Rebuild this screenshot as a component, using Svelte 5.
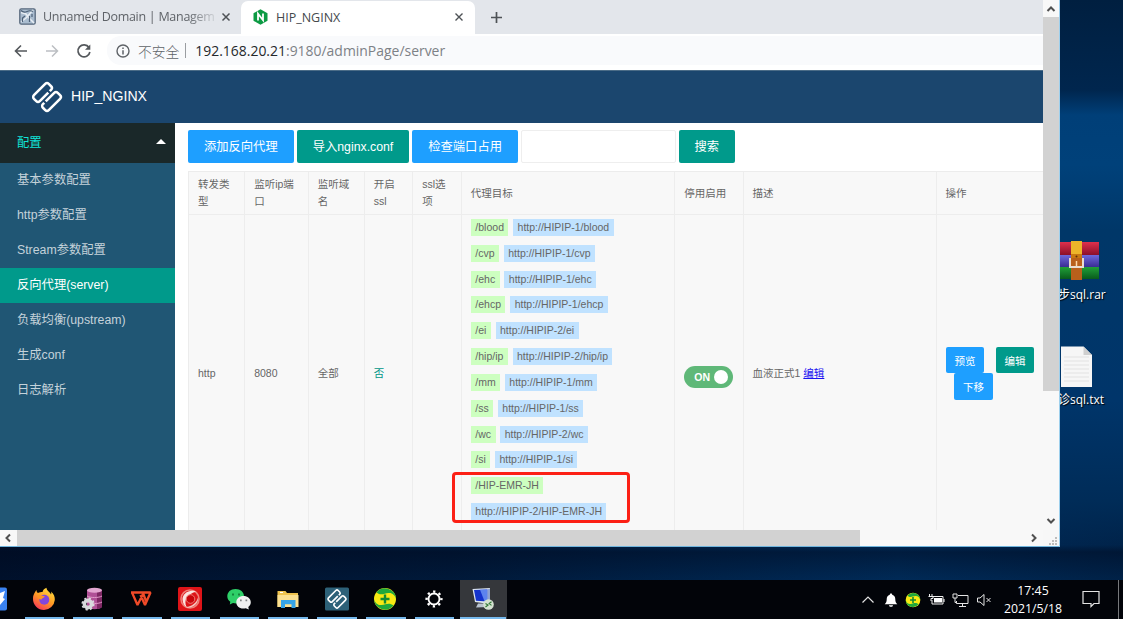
<script>
  const menu = ['基本参数配置', 'http参数配置', 'Stream参数配置', '反向代理(server)', '负载均衡(upstream)', '生成conf', '日志解析'];
  const active = '反向代理(server)';
  const heads = ['转发类型', '监听ip端口', '监听域名', '开启ssl', 'ssl选项', '代理目标', '停用启用', '描述', '操作'];
  const targets = [
    ['/blood', 'http://HIPIP-1/blood'],
    ['/cvp', 'http://HIPIP-1/cvp'],
    ['/ehc', 'http://HIPIP-1/ehc'],
    ['/ehcp', 'http://HIPIP-1/ehcp'],
    ['/ei', 'http://HIPIP-2/ei'],
    ['/hip/ip', 'http://HIPIP-2/hip/ip'],
    ['/mm', 'http://HIPIP-1/mm'],
    ['/ss', 'http://HIPIP-1/ss'],
    ['/wc', 'http://HIPIP-2/wc'],
    ['/si', 'http://HIPIP-1/si'],
    ['/HIP-EMR-JH', 'http://HIPIP-2/HIP-EMR-JH']
  ];
  const apps = ['firefox', 'database', 'wps', 'swirl', 'wechat', 'folder', 'hip', 'guard', 'settings', 'remote'];
</script>

{#snippet guard()}
  <circle cx="12" cy="12" r="11" fill="#f8e913" />
  <path d="M3.500 5.500A11 11 0 0 1 23 12C22 8 19 5.500 15.500 6 11 6.500 8 9 3.500 5.500Z" fill="#20a83c" />
  <path d="M20.500 18.500A11 11 0 0 1 1 12C2 16 5 18.500 8.500 18 13 17.500 16 15 20.500 18.500Z" fill="#20a83c" />
  <path d="M12 7.500v9M7.500 12h9" stroke="#148a33" stroke-width="2.400" />
{/snippet}

{#snippet hip()}
  <g transform="rotate(-45 16 16)" fill="none" stroke="#fff" stroke-width="2.500">
    <path d="M20 13.800H8a2.500 2.500 0 0 1-2.500-2.500V8A2.500 2.500 0 0 1 8 5.500h16a2.500 2.500 0 0 1 2.500 2.500v3.300a2.500 2.500 0 0 1-2.500 2.500h-2" />
    <path d="M12 18.200H24a2.500 2.500 0 0 1 2.500 2.500V24A2.500 2.500 0 0 1 24 26.500H8A2.500 2.500 0 0 1 5.500 24v-3.300a2.500 2.500 0 0 1 2.500-2.500h2" />
  </g>
{/snippet}

<div class="screen">
  <div class="desktop">
    <div class="shortcut rar">
      <svg width="40" height="40" viewBox="0 0 40 40">
        <defs>
          <linearGradient id="rr" x2="0" y2="1"><stop stop-color="#e0304c" /><stop offset="1" stop-color="#8b1029" /></linearGradient>
          <linearGradient id="rb" x2="0" y2="1"><stop stop-color="#6f69dc" /><stop offset="1" stop-color="#3a2c94" /></linearGradient>
          <linearGradient id="rg" x2="0" y2="1"><stop stop-color="#20a038" /><stop offset="1" stop-color="#095a1c" /></linearGradient>
        </defs>
        <rect y="1" width="39" height="13" fill="url(#rr)" />
        <rect y="14" width="39" height="12" fill="url(#rb)" />
        <rect y="26" width="39" height="12" fill="url(#rg)" />
        <rect x="11" width="11" height="39" fill="#b9601b" />
        <rect x="11" width="11" height="13" fill="#edb52a" />
        <rect x="11" y="13" width="11" height="4" fill="#c97812" />
        <path d="M10 17v9h13v-9" fill="none" stroke="#e8dcd0" stroke-width="2" />
        <path d="M16.500 20v5" stroke="#ffd9a8" stroke-width="1.500" />
        <circle cx="16.500" cy="15.500" r="1" fill="#5c3208" />
      </svg>
      <span>步sql.rar</span>
    </div>
    <div class="shortcut txt">
      <svg width="34" height="42" viewBox="0 0 34 42">
        <path d="M1 0.500h22.500l8.500 8.500v32H1z" fill="#f6f6f6" />
        <path d="M23.500 0.500V9H32z" fill="#cfcfcf" />
        <path d="M4 11h25M4 15h25M4 19h25M4 23h25M4 27h25M4 31h25M4 35h25" stroke="#e2e2e2" stroke-width="1" />
      </svg>
      <span>诊sql.txt</span>
    </div>

    <div class="window">
      <div class="page">
        <div class="tabs">
          <div class="tab idle">
            <svg width="17" height="17" viewBox="0 0 17 17">
              <rect x="0.800" y="0.800" width="15.400" height="15.400" rx="1.500" fill="#a9bccf" stroke="#58697d" stroke-width="1.300" />
              <path d="M2 4.500l5 1.500 3 4 5 5M2 14l5-4 7-8" fill="none" stroke="#e8eef4" stroke-width="1.500" />
              <path d="M2 2.500c2 2 4 2 6 1s4-1 6 0M6 8l-2.500 2v4M10.500 8v6M13 6v3" fill="none" stroke="#4d6178" stroke-width="1.200" />
            </svg>
            <span class="ttl fade">Unnamed Domain | Managem</span>
            <svg class="x" width="10" height="10" viewBox="0 0 10 10"><path d="M1.500 1.500l7 7M8.500 1.500l-7 7" stroke="#4e5256" stroke-width="1.500" /></svg>
          </div>
          <div class="tab on">
            <svg width="15" height="16" viewBox="0 0 15 16">
              <path d="M7.500 0.300L14.500 4.200v7.600L7.500 15.700L0.500 11.800V4.200z" fill="#0c9a43" />
              <path d="M5 11.500V4.700l5 6.500V4.500" fill="none" stroke="#fff" stroke-width="1.800" />
            </svg>
            <span class="ttl">HIP_NGINX</span>
            <svg class="x" width="10" height="10" viewBox="0 0 10 10"><path d="M1.500 1.500l7 7M8.500 1.500l-7 7" stroke="#4e5256" stroke-width="1.400" /></svg>
          </div>
          <svg class="plus" width="13" height="13" viewBox="0 0 13 13"><path d="M6.500 1v11M1 6.500h11" stroke="#4e5256" stroke-width="1.700" /></svg>
        </div>

        <div class="address">
          <svg width="16" height="16" viewBox="0 0 16 16"><path d="M14 8H2.500M8 2.500L2.500 8L8 13.500" fill="none" stroke="#54585c" stroke-width="1.600" /></svg>
          <svg width="16" height="16" viewBox="0 0 16 16"><path d="M2 8h11.500M8 2.500L13.500 8L8 13.500" fill="none" stroke="#bcbfc3" stroke-width="1.500" /></svg>
          <svg width="16" height="16" viewBox="0 0 16 16"><path d="M13 4.500A6 6 0 1 0 13.900 9" fill="none" stroke="#54585c" stroke-width="1.700" /><path d="M14.300 1.500v5.300H9z" fill="#54585c" /></svg>
          <div class="omni">
            <svg width="14" height="14" viewBox="0 0 14 14"><circle cx="7" cy="7" r="6" fill="none" stroke="#5f6368" stroke-width="1.400" /><path d="M7 6.200v4.200M7 3.500v1.500" stroke="#5f6368" stroke-width="1.500" /></svg>
            <span class="unsafe">不安全</span>
            <i></i>
            <span class="url"><b>192.168.20.21</b>:9180/adminPage/server</span>
          </div>
        </div>

        <header>
          <svg width="32" height="32" viewBox="0 0 32 32">{@render hip()}</svg>
          <span>HIP_NGINX</span>
        </header>

        <div class="body">
          <nav>
            <div class="group">配置<i></i></div>
            {#each menu as m}
              <div class="item" class:active={m === active}>{m}</div>
            {/each}
          </nav>
          <main>
            <div class="toolbar">
              <button class="blue">添加反向代理</button>
              <button class="green">导入nginx.conf</button>
              <button class="blue">检查端口占用</button>
              <input aria-label="搜索" />
              <button class="green">搜索</button>
            </div>
            <div class="table">
              {#each heads as h}
                <div class="cell head">{h}</div>
              {/each}
              <div class="cell">http</div>
              <div class="cell">8080</div>
              <div class="cell">全部</div>
              <div class="cell teal">否</div>
              <div class="cell"></div>
              <div class="cell targets">
                {#each targets as [path, url]}
                  <div class="pair"><span class="line"><span class="tag path">{path}</span></span><span class="line"><span class="tag dest">{url}</span></span></div>
                {/each}
                <div class="mark"></div>
              </div>
              <div class="cell"><div class="switch">ON<i></i></div></div>
              <div class="cell"><span>血液正式1 <a href="#edit">编辑</a></span></div>
              <div class="cell ops">
                <button class="blue">预览</button>
                <button class="green">编辑</button>
                <button class="blue down">下移</button>
              </div>
            </div>
          </main>
        </div>
      </div>

      <div class="vbar">
        <svg width="16" height="17" viewBox="0 0 16 17"><path d="M4.500 11L8 7.500L11.500 11" fill="none" stroke="#505050" stroke-width="2" /></svg>
        <div class="vthumb"></div>
        <svg width="16" height="17" viewBox="0 0 16 17"><path d="M4.500 6L8 9.500L11.500 6" fill="none" stroke="#505050" stroke-width="2" /></svg>
      </div>
      <div class="hbar">
        <svg width="17" height="16" viewBox="0 0 17 16"><path d="M10 4.500L6.500 8L10 11.500" fill="none" stroke="#505050" stroke-width="2" /></svg>
        <div class="hthumb"></div>
        <svg width="17" height="16" viewBox="0 0 17 16"><path d="M6 4.500L9.500 8L6 11.500" fill="none" stroke="#505050" stroke-width="2" /></svg>
      </div>
      <svg class="grip" width="16" height="16" viewBox="0 0 16 16"><path d="M12 7h2v2h-2zM12 10h2v2h-2zM9 10h2v2H9zM12 13h2v2h-2zM9 13h2v2H9zM6 13h2v2H6z" fill="#bdbdbd" /></svg>
    </div>
  </div>

  <footer>
    <div class="edge">
      <svg width="7" height="24" viewBox="0 0 7 24"><path d="M0 0.500h5a2 2 0 0 1 2 2v19a2 2 0 0 1-2 2H0z" fill="#3a82f0" /><path d="M0 6l5-2-2 7 2 1-5 6z" fill="#fff" /></svg>
    </div>
    {#each apps as a}
      <div class="app" class:current={a === 'remote'}>
        <svg width="24" height="24" viewBox="0 0 24 24">
          {#if a === 'firefox'}
            <defs><linearGradient id="ff" x1="0.800" y1="0" x2="0.200" y2="1"><stop stop-color="#ffe23f" /><stop offset="0.500" stop-color="#ff9a24" /><stop offset="1" stop-color="#f5305c" /></linearGradient></defs>
            <path d="M2 7C3 5 3.500 4 4.500 3c0 1.500.5 2.500 1.500 3 1.500-1 3-1 4.500-1C11 3 12.500 1.500 14.500.8 14.500 4 18 5 19 7.500 19.500 6.500 19.500 5.500 19 4.500 22 7 23 10 22.800 13A11 11 0 0 1 12 23 11 11 0 0 1 1 12C1 10 1.200 8.500 2 7z" fill="url(#ff)" />
            <circle cx="12.300" cy="12.800" r="5" fill="#8147dc" />
            <path d="M5 9c3-1.500 5 0 8 .5-1 1.500-3 1.300-3.500 3C7 12.500 6 11 5 9z" fill="#ff9424" />
          {:else if a === 'database'}
            <path d="M6 3h15v17c-3 3-12 3-15 0z" fill="#b05096" />
            <path d="M16 3h5v17c-1 1-3 2-5 2z" fill="#7e2864" />
            <ellipse cx="13.500" cy="3.200" rx="7.500" ry="2.500" fill="#e3a6d1" />
            <path d="M6 9c3 2 12 2 15 0M6 15c3 2 12 2 15 0" fill="none" stroke="#e39acb" />
            <circle cx="7" cy="17" r="3.600" fill="none" stroke="#d9dadd" stroke-width="3.600" />
            <circle cx="7" cy="17" r="5.700" fill="none" stroke="#d9dadd" stroke-width="1.800" stroke-dasharray="2.240 2.240" />
          {:else if a === 'wps'}
            <path d="M2 5.500h9.500M11.500 5.500h10l-5.500 12.500L11.500 8M3 5.500L8.500 18l5.500-11M14 6l3 8" fill="none" stroke="#f04a28" stroke-width="2.300" stroke-linejoin="bevel" />
          {:else if a === 'swirl'}
            <rect width="24" height="24" rx="2" fill="#de1418" />
            <circle cx="12" cy="12" r="9" fill="none" stroke="#ee8078" stroke-width="1.600" />
            <path d="M18 4.500C11 2 4 7 4.500 13c.5 3.500 2 6 4 7C5.500 13 9 7.500 18 4.500z" fill="#fbe5e0" />
            <path d="M8 20.500C15 22 21 16 20 10.500 18.500 16 14 19 8 20.500z" fill="#f5c8c0" />
            <circle cx="12.500" cy="12" r="4.300" fill="#c8060c" stroke="#ec7c74" />
          {:else if a === 'wechat'}
            <path d="M8.500 2C3.500 2 .3 5.200.3 9.200c0 2.500 1.200 4.300 3 5.500L2.800 17.500l3.200-1.600c7 2 11-2.500 11-6.700C17 5.200 13.500 2 8.500 2z" fill="#2ecf68" />
            <path d="M16.500 9c4 0 7.300 2.700 7.300 6.300 0 2-1 3.600-2.500 4.700l.5 2.500-3-1.300c-5.500 1.500-9.500-1.700-9.500-5.900C9.300 11.700 12.500 9 16.500 9z" fill="#eff0f0" />
            <path d="M5 6.500h2v2H5zM11 6.500h2v2h-2z" fill="#14853d" /><path d="M13 12.500h1.700v1.700H13zM18.500 12.500h1.700v1.700h-1.700z" fill="#818485" />
          {:else if a === 'folder'}
            <path d="M1.500 4h8l1.500 2h11v14H1.500z" fill="#eec34f" />
            <path d="M1.500 8h21v12H1.500z" fill="#fbe091" />
            <path d="M5 13h14.500v8h-4v-3.800h-6.500V21H5z" fill="#35a4e7" />
            <path d="M4 5.500h3" stroke="#fff" />
          {:else if a === 'hip'}
            <rect y="0.500" width="24" height="23" rx="1.500" fill="#2d6178" />
            <g transform="translate(1.600 1.600) scale(.65)">{@render hip()}</g>
          {:else if a === 'guard'}
            {@render guard()}
          {:else if a === 'settings'}
            <circle cx="12" cy="12" r="5.500" fill="none" stroke="#fff" stroke-width="1.900" />
            <circle cx="12" cy="12" r="7.400" fill="none" stroke="#fff" stroke-width="2.400" stroke-dasharray="2.300 3.512" stroke-dashoffset="1.150" />
          {:else}
            <path d="M1.500 2L19 1v14l-4 1.500L4 15z" fill="#dce5f0" />
            <path d="M3 3l13.500-.5v12L5 13.800z" fill="#1433cd" />
            <path d="M9 2.800l7.500-.3v12l-3-.2z" fill="#5c83ee" />
            <path d="M16.500 2.500L19 1.500v13l-2.500 1z" fill="#8ea2d0" />
            <path d="M7 16.500h8l2 3.500-12 .5z" fill="#b9c3cf" />
            <circle cx="17.500" cy="17.500" r="5.300" fill="#d5e2d2" />
            <path d="M14.500 16.500l2.500 1.500-2.500 2M20.500 14.800l-2.300 1.800 2.300 1.800" fill="none" stroke="#337b39" stroke-width="1.200" />
          {/if}
        </svg>
      </div>
    {/each}
    <div class="tray">
      <svg width="14" height="16" viewBox="0 0 14 16"><path d="M1.500 10.500L7 5l5.500 5.500" fill="none" stroke="#e4e4e4" stroke-width="1.200" /></svg>
      <svg width="14" height="16" viewBox="0 0 14 16"><path d="M7 1.500c.8 0 1.200.5 1.200 1.200C10.500 3.300 11.300 5 11.300 7.500c0 2.500.7 3.500 2 4.800H.700c1.300-1.300 2-2.300 2-4.800 0-2.500.8-4.200 3.100-4.800 0-.7.4-1.200 1.200-1.200zM5 13.200h4c0 2-4 2-4 0z" fill="#fff" /></svg>
      <svg width="16" height="16" viewBox="0 0 24 24">{@render guard()}</svg>
      <svg width="17" height="16" viewBox="0 0 17 16"><path d="M5 4.500h10v7.500H4V8" fill="none" stroke="#eee" /><path d="M6 6h8v4.500H6zM15.500 7h1v3h-1z" fill="#fff" /><path d="M1.500 2v2M4 2v2M.5 4.500h4.500v2H3V9" fill="none" stroke="#eee" /></svg>
      <svg width="17" height="16" viewBox="0 0 17 16"><path d="M6 3.500h10v8H4.500V9M10.500 11.500v3M7 14.500h7" fill="none" stroke="#e4e4e4" /><path d="M1 2h4v4H1zM3 6v4.500h1.500" fill="none" stroke="#e4e4e4" /></svg>
      <svg width="16" height="16" viewBox="0 0 16 16"><path d="M1.500 6H4l4-3.500v11L4 10H1.500zM10.500 6l4 4M14.500 6l-4 4" fill="none" stroke="#e4e4e4" /></svg>
    </div>
    <div class="clock"><span>17:45</span><span>2021/5/18</span></div>
    <svg class="note" width="18" height="18" viewBox="0 0 18 18"><path d="M1 1.500h16v12h-5L9 16.500v-3H1z" fill="none" stroke="#e4e4e4" stroke-width="1.200" /></svg>
    <div class="peek"></div>
  </footer>
</div>

<style>
  :global(body) { margin: 0; overflow: hidden; }
  * { box-sizing: border-box; }
  svg { display: block; flex: none; }
  .screen {
    width: 1123px; height: 619px; display: flex; flex-direction: column; overflow: hidden;
    font-family: "Liberation Sans", "Noto Sans CJK SC", sans-serif;
  }
  .desktop {
    position: relative; flex: 1; overflow: hidden;
    background:
      linear-gradient(to bottom, transparent 545px, rgba(0, 8, 28, .45) 552px, rgba(0, 10, 30, .05) 580px),
      linear-gradient(to bottom, #001f40, #00264e 90px, #003f78 115px, #00417a 165px, #003768 230px, #00356a 400px, #002c58 500px, transparent 545px) 1059px 0 / 64px 580px no-repeat,
      linear-gradient(to right, #00112c, #001a3b 40%, #002c5a 80%, #00234a);
  }
  .shortcut {
    position: absolute; display: flex; flex-direction: column; color: #fff;
    font: 12px/16px "Open Sans", "Noto Sans CJK SC", sans-serif; text-shadow: 1px 1px 1px #000;
  }
  .rar { left: 1060px; top: 241px; gap: 6px; }
  .txt { left: 1060px; top: 346px; gap: 4px; }
  .shortcut span { margin-left: -2px; white-space: nowrap; }
  .window {
    position: absolute; left: 0; top: 0; width: 1060px; height: 547px; display: grid;
    grid-template: 530px 16px / 1043px 16px; background: #f7f7f7;
    border-right: 1px solid #9ed0ed; border-bottom: 1px solid #6fb4dd;
  }
  .page { display: flex; flex-direction: column; overflow: hidden; background: #fff; }
  .tabs { height: 33.500px; flex: none; display: flex; background: #e3e6eb; align-items: stretch; }
  .tab { display: flex; align-items: center; font: 12.500px "Open Sans", sans-serif; color: #5f6368; }
  .idle { width: 241px; padding: 0 10px 0 19px; }
  .on { width: 234px; padding: 0 11px 0 12px; background: #fff; border-radius: 7px 7px 0 0; margin-top: 1px; color: #45494d; }
  .on .ttl { margin-left: 8px; }
  .ttl { white-space: nowrap; }
  .fade { margin-left: 7px; letter-spacing: -.280px; mask-image: linear-gradient(to right, #000 84%, rgba(0, 0, 0, .15)); }
  .x { margin-left: auto; }
  .plus { margin: 11px 0 0 15px; }
  .address { height: 36.500px; flex: none; display: flex; align-items: center; padding: 0 0 2px 13px; gap: 15.300px; background: #fff; }
  .omni {
    flex: 1; height: 29px; display: flex; align-items: center; padding-left: 9px;
    background: #f9fafc; border-radius: 14px 0 0 14px;
  }
  .unsafe { margin-left: 8px; font: 13.800px "Noto Sans CJK SC", sans-serif; font-weight: 300; color: #5f6368; }
  .omni i { width: 1px; height: 15px; background: #9a9da1; margin: 0 9px 0 6px; }
  .url { font: 13.950px "Open Sans", sans-serif; color: #7d8186; white-space: nowrap; }
  .url b { font-weight: 400; color: #25282b; }
  header {
    height: 53px; flex: none; display: flex; align-items: center; padding-left: 31px; gap: 8px;
    background: #1b466e; color: #fff; font-size: 14.100px; border-top: 1px solid #4b6c87;
  }
  header span { padding-bottom: 2px; }
  .body { flex: 1; display: flex; min-height: 0; }
  nav { width: 175.300px; flex: none; background: #205674; color: #c4d2da; font-size: 12.3px; }
  .group {
    height: 39.500px; padding: 0 9px 2px 17px; display: flex; align-items: center; justify-content: space-between;
    background: #1a2829; color: #10e4d8;
  }
  .group i { border: 5px solid transparent; border-bottom-color: #fff; border-top: 0; }
  .item { height: 35.100px; line-height: 35px; padding-left: 17px; white-space: nowrap; }
  .item.active { background: #009a8b; color: #fff; }
  main { flex: 1; padding: 7px 0 0 12.700px; min-width: 0; overflow: hidden; }
  .toolbar { display: flex; height: 33px; }
  button {
    border: 0; border-radius: 2px; padding: 0; color: #fff; text-align: center; white-space: nowrap;
    font: 12.3px "Liberation Sans", "Noto Sans CJK SC", sans-serif;
  }
  .blue { background: #1e9fff; }
  .green { background: #009a8b; }
  .toolbar button { width: 105.700px; margin-right: 3.300px; padding-bottom: 2px; }
  .toolbar button.green { width: 112px; }
  .toolbar input + button.green { width: 56px; }
  .toolbar input { width: 154.600px; border: 1px solid #eeeeee; border-radius: 2px; margin-right: 3px; padding: 0; }
  .table {
    margin-top: 8px; display: grid; width: 855.700px; color: #666; font-size: 10.5px;
    grid-template: 42.500px 318.500px / 56.200px 63.500px 56px 48.500px 48.500px 213.600px 68.300px 193px 108px;
    border-left: 1px solid #ececec; border-top: 1px solid #ececec; background: #f8f8f8;
  }
  .cell {
    display: flex; align-items: center; padding: 0 8px 0 9px; line-height: 17px;
    border-right: 1px solid #ededed; border-bottom: 1px solid #ededed;
  }
  .head { padding-top: 1px; }
  .teal { color: #009688; }
  .targets { position: relative; flex-direction: column; align-items: flex-start; justify-content: flex-start; padding-left: 9.300px; }
  .pair { display: flex; flex-wrap: wrap; column-gap: 4.800px; }
  .line { height: 25.830px; display: flex; align-items: center; }
  .tag { padding: 0 4.400px; white-space: nowrap; line-height: 17px; }
  .path { background: #cdffc0; }
  .dest { background: #c0e2ff; }
  .mark { position: absolute; left: -9.700px; top: 257.500px; width: 178px; height: 51px; border: 3px solid #fc2015; border-radius: 4px; }
  .switch {
    width: 49px; height: 22px; border-radius: 11px; background: #5fb878; color: #fff; font-weight: 700;
    display: flex; align-items: center; justify-content: space-between; padding: 0 5px 0 10px; margin-top: 8px; flex: none;
  }
  .switch i { width: 14px; height: 14px; border-radius: 50%; background: #fff; }
  a { color: #1a12f0; }
  .ops { flex-wrap: wrap; align-content: center; padding: 0; padding-left: 9.300px; }
  .ops button { width: 38.500px; height: 26.300px; font-size: 10.5px; }
  .ops .green { margin-left: 11.500px; }
  .ops .down { margin-left: 8.500px; }
  .vbar, .hbar { display: flex; background: #f8f8f8; }
  .vbar { flex-direction: column; }
  .vthumb { height: 374px; background: #d2d2d2; margin-bottom: auto; }
  .hthumb { width: 843px; background: #d2d2d2; margin-right: auto; }
  footer { height: 39px; flex: none; display: flex; background: #020409; color: #fff; }
  .edge { width: 19.500px; padding-top: 7px; }
  .app { width: 48.800px; display: flex; justify-content: center; padding-top: 7px; position: relative; }
  .app::after { content: ""; position: absolute; bottom: 0; left: 5px; right: 4.300px; height: 2px; background: #76b9ed; }
  .current { background: linear-gradient(#35373b, #35373b) 1px 0 / 47px 100% no-repeat; }
  .current::after { left: 1px; right: 1px; }
  .tray { margin-left: auto; display: flex; align-items: center; gap: 7px; }
  .tray :nth-child(2) { margin-left: 2px; }
  .clock { width: 82px; display: flex; flex-direction: column; align-items: center; padding-top: 2px; font: 12.3px/18px "Open Sans", sans-serif; }
  .note { margin: 10px 18px 0 8px; }
  .peek { width: 5px; border-left: 1px solid #77797c; }
</style>
